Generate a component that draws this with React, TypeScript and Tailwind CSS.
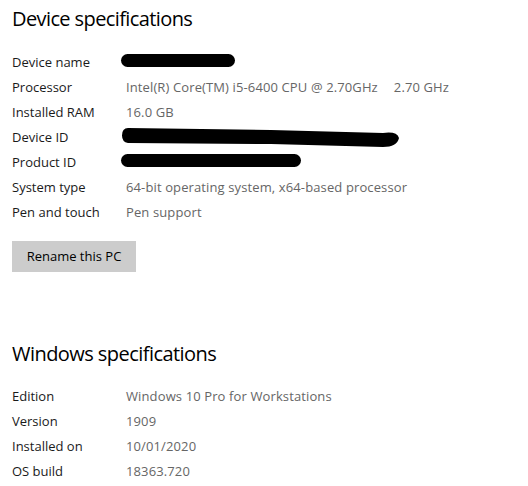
import React from "react";

const font = { fontFamily: '"Segoe UI", "Open Sans", "Noto Sans", sans-serif' };

function Row({ label, children }: { label: string; children: React.ReactNode }) {
  return (
    <div className="flex h-[25px] items-center text-[13px]">
      <div className="w-[114px] shrink-0 text-[#1a1a1a]">{label}</div>
      <div className="flex items-center text-[#666666] whitespace-nowrap tracking-[0.12px]">{children}</div>
    </div>
  );
}

function Blob({ w }: { w: string }) {
  return <span className={`inline-block h-[13px] rounded-full bg-black ${w}`} />;
}

export default function App() {
  return (
    <div className="w-[528px] h-[486px] bg-white pl-3 pt-[5px] overflow-hidden" style={font}>
      <h2 className="text-[20px] leading-[28px] tracking-[-0.6px] text-black font-normal">Device specifications</h2>
      <div className="mt-[17px]">
        <Row label="Device name">
          <span className="block -ml-[5px]"><Blob w="w-[114px]" /></span>
        </Row>
        <Row label="Processor">
          <span>Intel(R) Core(TM) i5-6400 CPU @ 2.70GHz</span>
          <span className="inline-block w-[16px]" />
          <span>2.70 GHz</span>
        </Row>
        <Row label="Installed RAM">16.0 GB</Row>
        <Row label="Device ID">
          <svg width="282" height="22" viewBox="0 0 282 22" className="-ml-[5px] block">
            <path d="M7 1 L150 3 L262 6 Q276 4 278 11 Q276 20 262 20 L150 17 L7 16 Q1 15 1 8.5 Q1 1 7 1 Z" fill="black" />
          </svg>
        </Row>
        <Row label="Product ID">
          <span className="block -ml-[5px]"><Blob w="w-[180px]" /></span>
        </Row>
        <Row label="System type">64-bit operating system, x64-based processor</Row>
        <Row label="Pen and touch">Pen support</Row>
      </div>
      <button className="mt-[16px] w-[124px] h-[31px] bg-[#cccccc] text-[13px] text-black">Rename this PC</button>
      <h2 className="mt-[68px] text-[20px] leading-[28px] tracking-[-0.55px] text-black font-normal">Windows specifications</h2>
      <div className="mt-[16px]">
        <Row label="Edition">Windows 10 Pro for Workstations</Row>
        <Row label="Version">1909</Row>
        <Row label="Installed on">10/01/2020</Row>
        <Row label="OS build">18363.720</Row>
      </div>
    </div>
  );
}
